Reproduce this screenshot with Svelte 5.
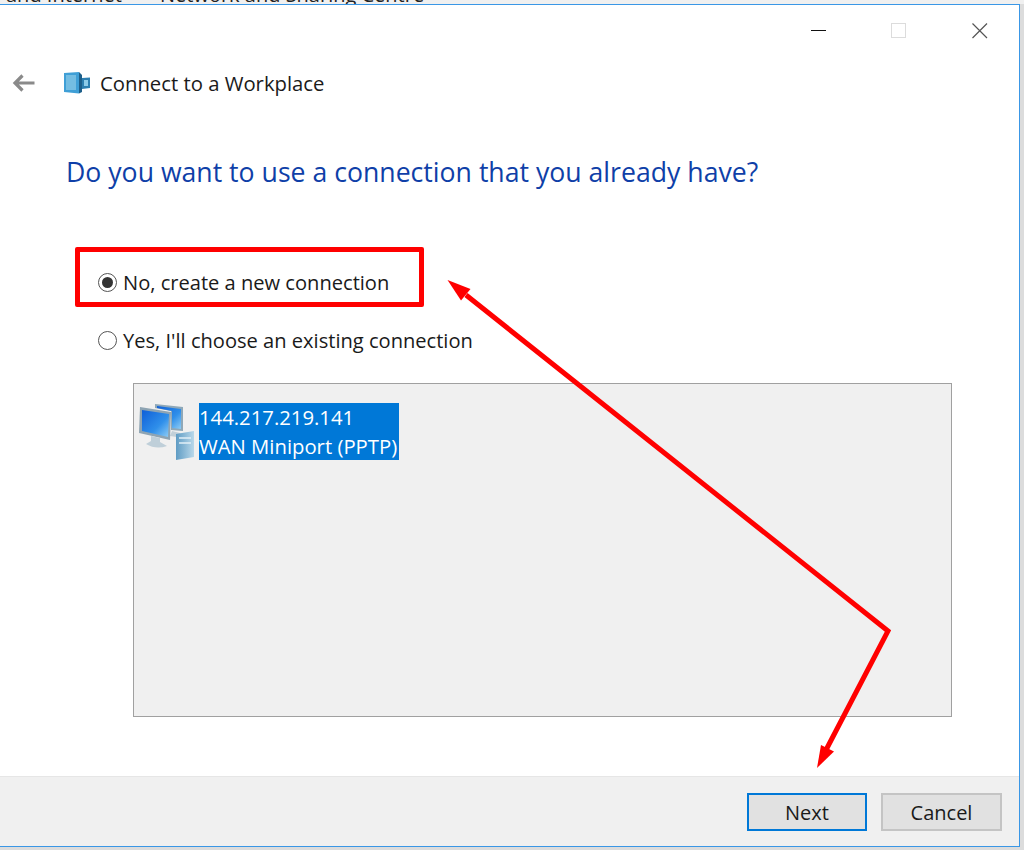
<script lang="ts">
	const items = ['144.217.219.141', 'WAN Miniport (PPTP)'];
</script>

<div class="screen">
	<div class="behind">
		<span class="crumb first">and Internet</span>
		<span class="crumb">Network and Sharing Centre</span>
	</div>

	<div class="window">
		<div class="titlebar">
			<svg class="caption" width="224" height="40" viewBox="0 0 224 40">
				<line x1="11" y1="25.5" x2="26" y2="25.5" stroke="#111" stroke-width="1" />
				<rect x="91.5" y="18.5" width="14" height="14" fill="none" stroke="#dcdcdc" stroke-width="1" />
				<path d="M172.5 18.5 L187 33 M187 18.5 L172.5 33" stroke="#555" stroke-width="1.2" fill="none" />
			</svg>
		</div>

		<div class="nav">
			<svg class="back" width="24" height="20" viewBox="0 0 24 20">
				<path d="M22.5 10 H3 M10.5 2.5 L3 10 L10.5 17.5" fill="none" stroke="#8a8a8a" stroke-width="3.2" />
			</svg>
			<svg class="building" width="28" height="22" viewBox="0 0 28 22">
				<path d="M1 1 L16 0 V21.5 L1 20 Z" fill="#3f9fd6" />
				<path d="M3 3 H13 V18 H3 Z" fill="#74bde2" />
				<path d="M16 0 L19 3 V20 L16 21.5 Z" fill="#1d5f8a" />
				<path d="M19 6 L27 5.5 V16 L19 17 Z" fill="#2d7fb0" />
				<path d="M21 8 H25 V14 H21 Z" fill="#8dcbe8" />
			</svg>
			<span class="nav-title">Connect to a Workplace</span>
		</div>

		<div class="content">
			<h1 class="question">Do you want to use a connection that you already have?</h1>

			<div class="options">
				<div class="option">
					<span class="radio checked"></span>
					<span>No, create a new connection</span>
				</div>
				<div class="option">
					<span class="radio"></span>
					<span>Yes, I'll choose an existing connection</span>
				</div>
			</div>

			<div class="listbox">
				<svg class="net-icon" width="57" height="58" viewBox="0 0 57 58">
					<defs>
						<linearGradient id="screenGrad" x1="0" y1="0" x2="1" y2="1">
							<stop offset="0" stop-color="#0f5fd8" />
							<stop offset="0.6" stop-color="#2f8fea" />
							<stop offset="1" stop-color="#8fcdf5" />
						</linearGradient>
						<linearGradient id="towerGrad" x1="0" y1="0" x2="1" y2="0">
							<stop offset="0" stop-color="#5f9cc4" />
							<stop offset="1" stop-color="#b9d8ea" />
						</linearGradient>
					</defs>
					<!-- back monitor -->
					<path d="M16 1 L44 4 V28 L32 27 V8 L16 5 Z" fill="#8fa8b8" />
					<path d="M18 3 L42 6 V26 L33 25 V8 L18 5 Z" fill="url(#screenGrad)" />
					<path d="M33 28 L41 30 L44 35 L31 33 Z" fill="#c3d0d8" />
					<!-- front monitor -->
					<path d="M1 4 L32 9 L31 37 L0 30 Z" fill="#8ea4b3" />
					<path d="M3 7 L30 11 L29 34 L3 28 Z" fill="url(#screenGrad)" />
					<path d="M12 33 L21 35 L21 39 L28 43 Q17 47 7 41 L12 38 Z" fill="#bfcfd9" />
					<!-- tower -->
					<path d="M37 31 L55 28 V54 L37 57 Z" fill="url(#towerGrad)" />
					<path d="M40 35 H52 M40 40 H52" stroke="#e2f0f8" stroke-width="1.5" />
				</svg>
				<div class="item-text">
					{#each items as item}
						<span class="selected">{item}</span>
					{/each}
				</div>
			</div>
		</div>

		<div class="footer">
			<button class="btn default">Next</button>
			<button class="btn">Cancel</button>
		</div>
	</div>

	<!-- red annotations drawn on top of the dialog -->
	<div class="mark"></div>
	<svg class="arrows" width="1024" height="850" viewBox="0 0 1024 850">
		<path d="M466 295 L888 631 L826 750" fill="none" stroke="#ff0000" stroke-width="5" stroke-linejoin="miter" />
		<path d="M447.5 280 L470.5 289 L461 300.5 Z" fill="#ff0000" />
		<path d="M817 768 L821 745 L834 751.5 Z" fill="#ff0000" />
	</svg>
</div>

<style>
	:global(body) {
		margin: 0;
	}

	.screen {
		position: relative;
		width: 1024px;
		height: 850px;
		overflow: hidden;
		background: #dcdcdc;
		font-family: 'Open Sans', 'Noto Sans', sans-serif;
		color: #1a1a1a;
	}

	.behind {
		height: 4px;
		overflow: hidden;
		display: flex;
		background: #f0f0f0;
		font-size: 20px;
		line-height: 4px;
		color: #222;
	}

	.crumb {
		margin-top: -7px;
		white-space: nowrap;
	}

	.crumb.first {
		width: 160px;
		margin-left: 0;
		text-indent: 6px;
	}

	.window {
		box-sizing: border-box;
		width: 1020px;
		height: 843px;
		border-top: 1px solid #3a97e6;
		border-right: 1px solid #3a97e6;
		border-bottom: 1px solid #3a97e6;
		background: #fff;
		display: flex;
		flex-direction: column;
	}

	.titlebar {
		height: 40px;
		flex: none;
		display: flex;
		justify-content: flex-end;
	}

	.caption {
		display: block;
		margin-right: -5px;
		margin-top: 0;
	}

	.nav {
		height: 76px;
		flex: none;
		display: flex;
		align-items: center;
		padding-left: 12px;
	}

	.back {
		flex: none;
		margin-right: 27px;
	}

	.building {
		flex: none;
		margin-right: 9px;
	}

	.nav-title {
		font-size: 20.3px;
	}

	.content {
		flex: 1;
		padding: 0 66px;
		min-height: 0;
	}

	.question {
		margin: 33px 0 0;
		font-size: 26.65px;
		line-height: 36px;
		font-weight: 400;
		color: #0f3fa8;
		white-space: nowrap;
	}

	.options {
		margin-top: 78px;
		margin-left: 32px;
		display: flex;
		flex-direction: column;
		gap: 30px;
	}

	.option {
		display: flex;
		align-items: center;
		gap: 6px;
		height: 28px;
		font-size: 20.1px;
		white-space: nowrap;
	}

	.radio {
		box-sizing: border-box;
		width: 19px;
		height: 19px;
		border: 1.5px solid #555;
		border-radius: 50%;
		flex: none;
		background: #fff;
		display: flex;
		align-items: center;
		justify-content: center;
	}

	.radio.checked::after {
		content: '';
		width: 11px;
		height: 11px;
		border-radius: 50%;
		background: #333;
	}

	.listbox {
		box-sizing: border-box;
		margin-top: 29px;
		margin-left: 67px;
		width: 819px;
		height: 334px;
		border: 1px solid #a0a0a0;
		background: #f0f0f0;
		display: flex;
		align-items: flex-start;
		padding: 19px 0 0 5px;
	}

	.net-icon {
		flex: none;
		margin-right: 3px;
	}

	.item-text {
		display: flex;
		flex-direction: column;
		align-items: flex-start;
		background: #0078d7;
		width: 200px;
		height: 57px;
		font-size: 20.3px;
		line-height: 29px;
	}

	.selected {
		color: #fff;
		white-space: nowrap;
	}

	.footer {
		height: 70px;
		flex: none;
		box-sizing: border-box;
		border-top: 1px solid #e6e6e6;
		background: #f0f0f0;
		display: flex;
		justify-content: flex-end;
		align-items: flex-start;
		gap: 14px;
		padding: 16px 17px 0 0;
	}

	.btn {
		box-sizing: border-box;
		width: 121px;
		height: 38px;
		padding: 0;
		background: #e1e1e1;
		border: 2px solid #c4c4c4;
		font-family: inherit;
		font-size: 20px;
		color: #1a1a1a;
	}

	.btn.default {
		width: 120px;
		border-color: #0078d7;
	}

	.mark {
		position: absolute;
		left: 75px;
		top: 247px;
		width: 349px;
		height: 60px;
		box-sizing: border-box;
		border: 5px solid #ff0000;
		border-radius: 2px;
	}

	.arrows {
		position: absolute;
		left: 0;
		top: 0;
		pointer-events: none;
	}
</style>
